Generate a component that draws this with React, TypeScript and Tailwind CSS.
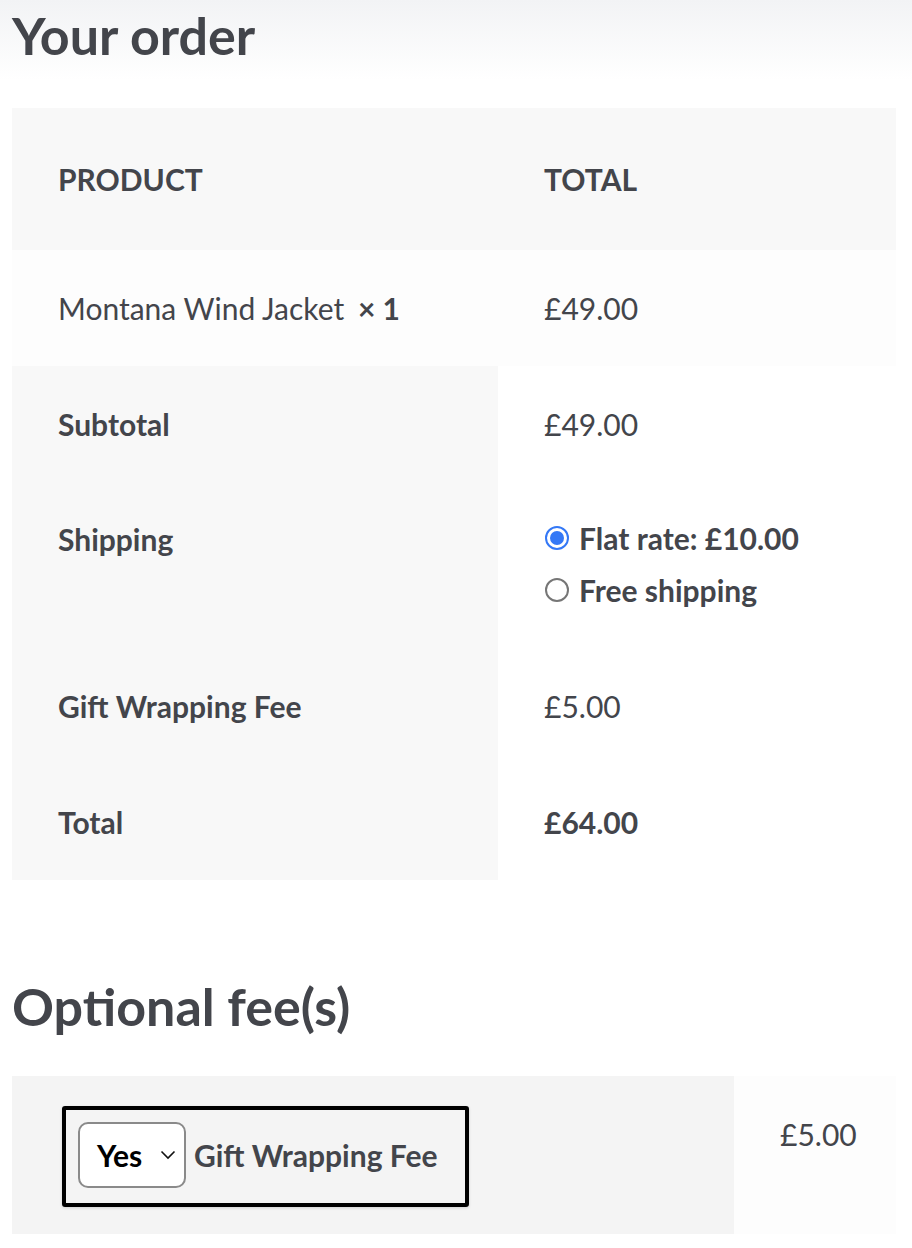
import React from 'react';

const font = { fontFamily: 'Lato, "Noto Sans", sans-serif' };

const Radio: React.FC<{ checked?: boolean; label: string }> = ({ checked, label }) => (
  <li className="flex items-center h-[34px] mb-[18px] last:mb-0">
    {checked ? (
      <span className="w-[24px] h-[24px] rounded-full border-[2px] border-[#3478f6] flex items-center justify-center shrink-0">
        <span className="w-[14px] h-[14px] rounded-full bg-[#3478f6]" />
      </span>
    ) : (
      <span className="w-[24px] h-[24px] rounded-full border-[2px] border-[#767676] bg-white shrink-0" />
    )}
    <span className="ml-[10px] font-bold">{label}</span>
  </li>
);

export default function App() {
  return (
    <div
      className="min-h-[1248px] bg-[linear-gradient(to_bottom,#f2f3f5,#ffffff_80px)] text-[#43454b] px-[12px] pb-[14px]"
      style={font}
    >
      <h2 className="h-[108px] pt-[5px] text-[52px] leading-[60px] font-bold">Your order</h2>

      <div className="w-[884px] text-[30px] leading-[34px]">
        {/* head */}
        <div className="grid grid-cols-[486px_398px] bg-[#f8f8f8] font-bold uppercase">
          <div className="pl-[46px] py-[54px]">Product</div>
          <div className="pl-[46px] py-[54px]">Total</div>
        </div>

        {/* item */}
        <div className="grid grid-cols-[486px_398px] bg-[#fdfdfd]">
          <div className="pl-[46px] py-[41px]">
            Montana Wind Jacket <strong className="ml-[6px] font-bold">× 1</strong>
          </div>
          <div className="pl-[46px] py-[41px]">£49.00</div>
        </div>

        {/* totals */}
        <div className="grid grid-cols-[486px_398px]">
          <div className="bg-[#f8f8f8] pl-[46px] py-[41px] font-bold">Subtotal</div>
          <div className="pl-[46px] py-[41px]">£49.00</div>

          <div className="bg-[#f8f8f8] pl-[46px] py-[40px] font-bold">Shipping</div>
          <div className="pl-[47px] pt-[39px] pb-[41px]">
            <ul>
              <Radio checked label="Flat rate: £10.00" />
              <Radio label="Free shipping" />
            </ul>
          </div>

          <div className="bg-[#f8f8f8] pl-[46px] py-[41px] font-bold">Gift Wrapping Fee</div>
          <div className="pl-[46px] py-[41px]">£5.00</div>

          <div className="bg-[#f8f8f8] pl-[46px] py-[41px] font-bold">Total</div>
          <div className="pl-[46px] py-[41px] font-bold">£64.00</div>
        </div>
      </div>

      <h2 className="pt-[96px] h-[196px] text-[52px] leading-[60px] font-bold">Optional fee(s)</h2>

      <div className="w-[884px] grid grid-cols-[722px_162px] text-[30px] leading-[34px]">
        <div className="bg-[#f4f4f4] pl-[50px] pt-[30px] pb-[27px]">
          <div className="inline-flex items-center border-[4px] border-black rounded-[3px] pl-[12px] pr-[28px] pt-[12px] pb-[15px] shadow-[0_1px_3px_rgba(0,0,0,0.15)]">
            <div className="w-[108px] h-[66px] bg-white border-[2px] border-[#8a8a8a] rounded-[10px] flex items-center pl-[17px] pr-[8px] text-black font-bold">
              <span>Yes</span>
              <svg className="ml-auto" width="16" height="10" viewBox="0 0 16 10" fill="none">
                <path d="M1.5 1.5 L8 8 L14.5 1.5" stroke="#111" strokeWidth="1.6" />
              </svg>
            </div>
            <span className="ml-[8px] font-bold">Gift Wrapping Fee</span>
          </div>
        </div>
        <div className="bg-[#fdfdfd] pl-[46px] pt-[41px]">£5.00</div>
      </div>
    </div>
  );
}
